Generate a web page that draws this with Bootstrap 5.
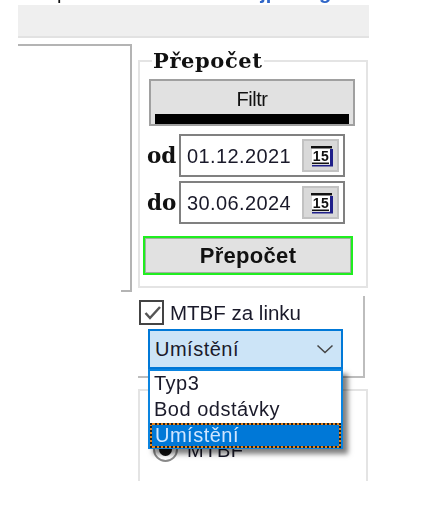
<!DOCTYPE html>
<html lang="cs">
<head>
<meta charset="utf-8">
<title>Přepočet</title>
<link href="https://cdn.jsdelivr.net/npm/bootstrap@5.3.0/dist/css/bootstrap.min.css" rel="stylesheet">
<style>
html,body{background:#fff;margin:0;overflow:hidden}
.shot{width:351px;margin-left:18px;height:508px;font-family:"Liberation Sans",sans-serif;color:#111;filter:blur(.5px)}
.clipline{height:5px;overflow:hidden;font-size:20px;line-height:20px;margin-left:-18px;width:432px}
.clipline span{display:block;margin-top:-18px;white-space:nowrap}
.clipblack{margin-left:57px}
.clipblue{color:#2f66c8;font-weight:700;margin-left:192px}
.clipblue2{color:#2f66c8;font-weight:700;margin-left:41px}
.topbar{height:33px;background:#efefef;border-bottom:2px solid #e2e2e2}
.leftpanel{width:114px;height:248px;margin-top:6px;border-top:2px solid #b4b4b4;border-right:2px solid #b4b4b4;position:relative;flex:none}
.leftfoot{height:2px;width:11px;background:#b4b4b4;position:absolute;right:-2px;bottom:0}
.rightcol{width:230px;margin-left:6px;margin-top:14px;flex:none}
.calcset{border:2px solid #e4e4e4;height:236px;padding:0 9px;margin:0;min-width:0}
.calcset legend{float:none;width:auto;margin:0 0 0 3px;padding:0 1px;font:700 21px/18px "DejaVu Serif",serif;letter-spacing:.6px;color:#111}
.filterbtn{display:block;width:206px;height:47px;margin:9px 0 8px 0;padding:6px 4px 0;background:#e1e1e1;border:2px solid #a0a0a0;font-size:20px;letter-spacing:-.5px;line-height:24px;text-align:center;border-radius:0;color:#111}
.filterbar{display:block;height:10px;background:#000;margin-top:3px}
.daterow{height:43px;margin-bottom:4px}
.datelabel{width:32px;margin-left:-2px;font:700 21.5px/1 "DejaVu Serif",serif}
.datebox{width:166px;height:43px;border:2px solid #808080;padding:0 4px 0 6px;font-size:20px;letter-spacing:.4px;color:#1a1a2a;background:#fff}
.calbtn{width:37px;height:33px;background:#d9d9d9;border:2px solid #c2c2c2;flex:none}
.calbtn svg{display:block;margin:1px auto 0}
.runbtn{display:block;width:210px;height:39px;margin:12px 0 0 -6px;padding:0;background:#e1e1e1;border:2px solid #1fee1f;box-shadow:inset 0 0 0 1px #9fb09f;font-weight:700;font-size:22px;letter-spacing:.3px;line-height:33px;color:#111;border-radius:0;text-align:center}
.linkgroup{width:227px;height:82px;margin-top:8px;border-right:2px solid #bdbdbd;border-bottom:2px solid #bdbdbd;padding-top:4px;position:relative}
.checkline{margin-left:1px;font-size:20.5px;line-height:25px;color:#1a1a2a}
.checkface{width:25px;height:25px;border:2px solid #444;background:#fff;flex:none;margin-right:6px}
.checkface svg{display:block}
.selectwrap{width:195px;margin:4px 0 0 10px;position:relative}
.selectface{height:40px;background:#cce4f7;border:2px solid #0078d7;padding:0 7px 0 5px;font-size:20px;letter-spacing:.5px;color:#1a1a2a}
.optionlist{position:absolute;left:0;top:100%;width:195px;height:80px;z-index:5;background:#fff;border:2px solid #0a84e0;box-shadow:5px 5px 5px rgba(0,0,0,.5);font-size:20px;letter-spacing:.5px;color:#1a1a2a;padding-left:4px}
.optionitem{height:26px;white-space:nowrap;line-height:25px}
.optionsel{margin-left:-4px;padding-left:3px;height:25px;background:linear-gradient(#0078d7,#0078d7) padding-box,#e8851a border-box;border:2px dotted #222;color:#cfe6ff;line-height:21px}
.typegroup{height:92px;margin-top:11px;border:2px solid #e4e4e4;border-bottom:0;padding:46px 0 0 13px;font-size:20px;color:#1a1a2a;letter-spacing:.5px;line-height:26px}
.radioface{width:25px;height:25px;border-radius:50%;border:2px solid #8a8a8a;background:#fff;padding:4px;flex:none;margin-right:9px}
.radiodot{display:block;width:13px;height:13px;border-radius:50%;background:#111}
</style>
</head>
<body>
<div class="shot">
  <div class="clipline d-flex"><span class="clipblack">p</span><span class="clipblue">jp</span><span class="clipblue2">g</span></div>
  <div class="topbar"></div>
  <div class="d-flex">
    <div class="leftpanel"><div class="leftfoot"></div></div>
    <div class="rightcol">
      <fieldset class="calcset">
        <legend>Přepočet</legend>
        <button type="button" class="filterbtn">Filtr<span class="filterbar"></span></button>
        <div class="daterow d-flex align-items-center">
          <span class="datelabel">od</span>
          <div class="datebox d-flex align-items-center justify-content-between"><span>01.12.2021</span>
            <span class="calbtn"><svg width="30" height="28" viewBox="0 0 30 28"><rect x="5" y="4" width="21" height="2.4" fill="#111"/><rect x="6" y="7" width="18" height="15" fill="#fff"/><rect x="24" y="7" width="3" height="17" fill="#20208a"/><rect x="6" y="23" width="21" height="1.5" fill="#20208a"/><rect x="6" y="20.500" width="17" height="1.5" fill="#111"/><text x="15" y="19" font-family="Liberation Sans" font-size="14" font-weight="700" text-anchor="middle" fill="#111">15</text></svg></span>
          </div>
        </div>
        <div class="daterow d-flex align-items-center">
          <span class="datelabel">do</span>
          <div class="datebox d-flex align-items-center justify-content-between"><span>30.06.2024</span>
            <span class="calbtn"><svg width="30" height="28" viewBox="0 0 30 28"><rect x="5" y="4" width="21" height="2.4" fill="#111"/><rect x="6" y="7" width="18" height="15" fill="#fff"/><rect x="24" y="7" width="3" height="17" fill="#20208a"/><rect x="6" y="23" width="21" height="1.5" fill="#20208a"/><rect x="6" y="20.500" width="17" height="1.5" fill="#111"/><text x="15" y="19" font-family="Liberation Sans" font-size="14" font-weight="700" text-anchor="middle" fill="#111">15</text></svg></span>
          </div>
        </div>
        <button type="button" class="runbtn">Přepočet</button>
      </fieldset>
      <div class="linkgroup">
        <div class="checkline d-flex align-items-center">
          <span class="checkface"><svg width="21" height="21" viewBox="0 0 21 21"><path d="M4.500 11 L9 16 L19 5" fill="none" stroke="#555" stroke-width="2.500"/></svg></span>
          MTBF za linku
        </div>
        <div class="selectwrap">
          <div class="selectface d-flex align-items-center justify-content-between"><span>Umístění</span>
            <svg width="18" height="10" viewBox="0 0 18 10"><path d="M1.500 1.500 L9 8.500 L16.500 1.500" fill="none" stroke="#444" stroke-width="1.500"/></svg>
          </div>
          <div class="optionlist">
            <div class="optionitem">Typ3</div>
            <div class="optionitem">Bod odstávky</div>
            <div class="optionitem optionsel">Umístění</div>
          </div>
        </div>
      </div>
      <div class="typegroup d-flex align-items-start">
        <span class="radioface"><span class="radiodot"></span></span>
        <span>MTBF</span>
      </div>
    </div>
  </div>
</div>
<script src="https://cdn.jsdelivr.net/npm/bootstrap@5.3.0/dist/js/bootstrap.bundle.min.js"></script>
</body>
</html>
